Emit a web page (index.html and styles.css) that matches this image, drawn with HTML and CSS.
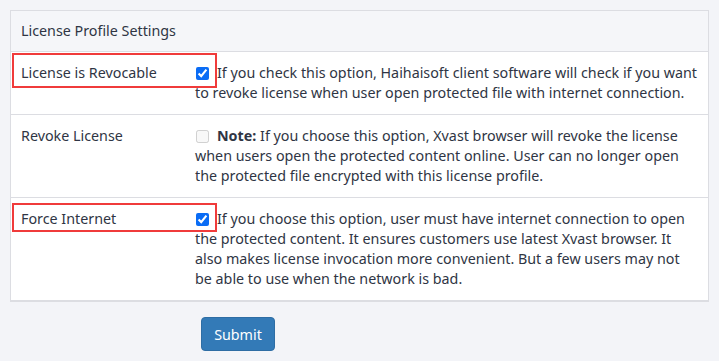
FILE: index.html
```html
<!DOCTYPE html>
<html>
<head>
<meta charset="utf-8">
<link rel="stylesheet" href="styles.css">
</head>
<body>
<div class="page">
  <div class="panel">
    <div class="panel-head">License Profile Settings</div>
    <div class="row">
      <div class="label">License is Revocable</div>
      <div class="desc"><input type="checkbox" class="cb" checked>If you check this option, Haihaisoft client software will check if you want to revoke license when user open protected file with internet connection.</div>
      <div class="mark"></div>
    </div>
    <div class="row">
      <div class="label">Revoke License</div>
      <div class="desc"><input type="checkbox" class="cb" disabled><b>Note:</b> If you choose this option, Xvast browser will revoke the license when users open the protected content online. User can no longer open the protected file encrypted with this license profile.</div>
    </div>
    <div class="row last">
      <div class="label">Force Internet</div>
      <div class="desc"><input type="checkbox" class="cb" checked>If you choose this option, user must have internet connection to open the protected content. It ensures customers use latest Xvast browser. It also makes license invocation more convenient. But a few users may not be able to use when the network is bad.</div>
      <div class="mark mark-short"></div>
    </div>
  </div>
  <div class="actions">
    <button class="btn">Submit</button>
  </div>
</div>
</body>
</html>
```
FILE: styles.css
```css
html, body {
  margin: 0;
  padding: 0;
  background: #f3f4f8;
}
.page {
  padding: 10px 10px 0 10px;
  font-family: "Noto Sans", "Open Sans", sans-serif;
  font-size: 14.3px;
  line-height: 20px;
  color: #2f3544;
}
.panel {
  border: 1px solid #dcdde2;
  border-bottom: 2px solid #dcdde2;
  background: #fff;
}
.panel-head {
  background: #f5f6f9;
  padding: 10px 10px;
  border-bottom: 1px solid #dcdde2;
}
.row {
  position: relative;
  display: flex;
  padding: 11px 8px 11px 10px;
  border-bottom: 1px solid #dcdde2;
}
.row.last {
  border-bottom: none;
}
.label {
  width: 174px;
  flex: none;
}
.desc {
  flex: 1;
}
.cb {
  width: 13px;
  height: 13px;
  margin: 0 8px 0 1px;
  vertical-align: -2px;
  accent-color: #0a6cf5;
}
b {
  font-weight: 700;
}
.mark {
  position: absolute;
  left: 1px;
  top: 1px;
  width: 201px;
  height: 31px;
  border: 2px solid #f03b3b;
}
.mark-short {
  top: 5px;
  height: 25px;
}
.actions {
  padding: 15px 0 0 191px;
}
.btn {
  width: 74px;
  height: 34px;
  background: #337ab7;
  border: 1px solid #2e6da4;
  border-radius: 4px;
  color: #fff;
  font-family: "Noto Sans", "Open Sans", sans-serif;
  font-size: 14.3px;
  padding: 0;
}
```
